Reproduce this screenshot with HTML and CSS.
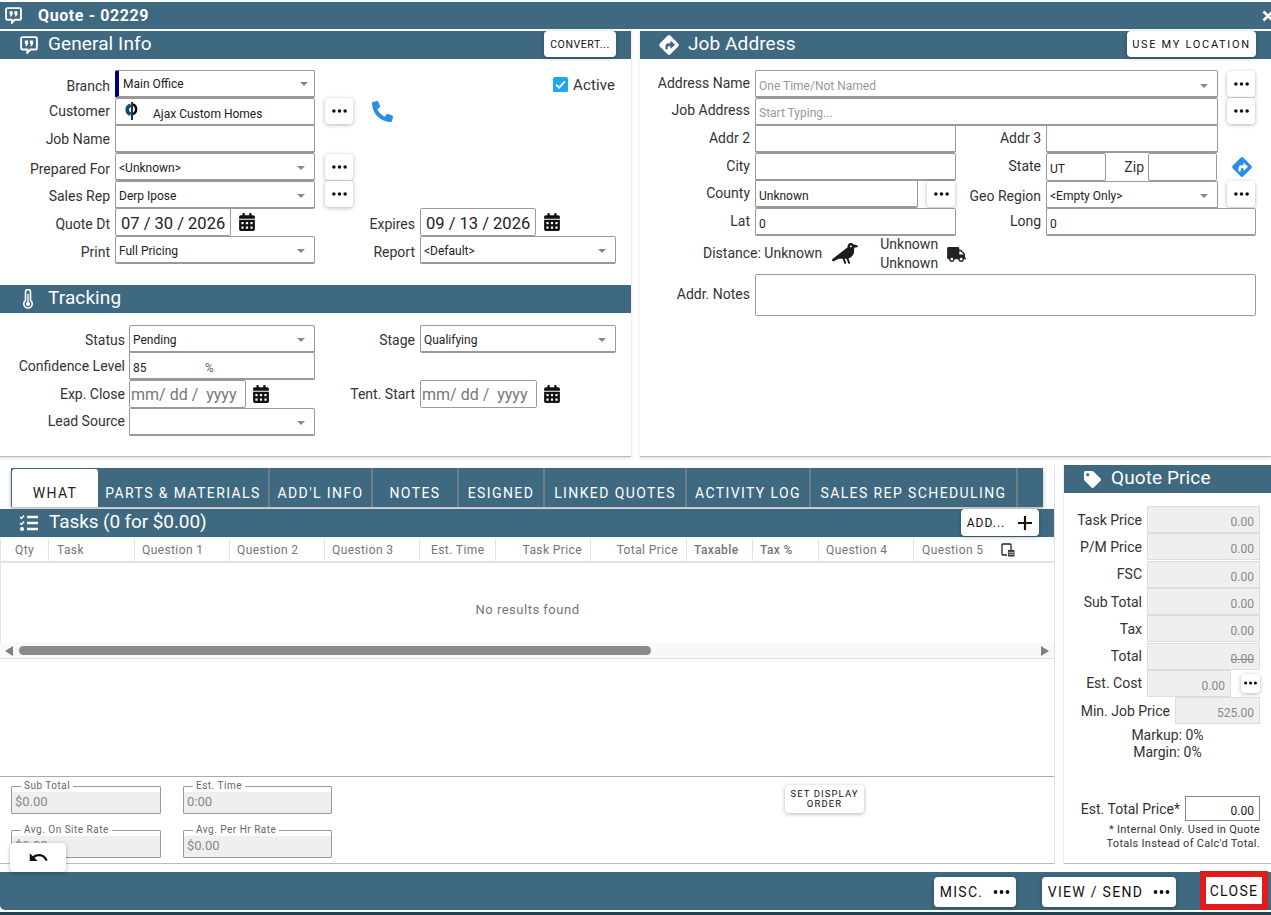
FILE: index.html
```html
<!DOCTYPE html>
<html>
<head>
    <meta charset="utf-8">
    <title>Quote - 02229</title>
    <link rel="stylesheet" href="styles.css">
</head>
<body>
    <svg class="defs" width="0" height="0">
        <symbol id="i-bubble" viewBox="0 0 16 16">
            <path d="M2.200 1h11.600c.7 0 1.200.5 1.200 1.200v8.600c0 .7-.5 1.200-1.200 1.200H9.200L6.500 15v-3H2.200c-.7 0-1.200-.5-1.200-1.200V2.200C1 1.500 1.500 1 2.200 1z" fill="none" stroke="currentColor" stroke-width="1.700"/>
            <path d="M4.300 4h2.900v3l-1.400 2H4.600l.8-2H4.300zM8.800 4h2.900v3l-1.400 2H9.100l.8-2H8.800z" fill="currentColor"/>
        </symbol>
        <symbol id="i-dots" viewBox="0 0 16 4">
            <circle cx="2" cy="2" r="1.900"/><circle cx="8" cy="2" r="1.900"/><circle cx="14" cy="2" r="1.900"/>
        </symbol>
        <symbol id="i-cal" viewBox="0 0 448 512">
            <path d="M0 464c0 26.500 21.500 48 48 48h352c26.500 0 48-21.500 48-48V192H0v272zm320-196c0-6.600 5.400-12 12-12h40c6.600 0 12 5.400 12 12v40c0 6.600-5.400 12-12 12h-40c-6.600 0-12-5.400-12-12v-40zm0 128c0-6.600 5.400-12 12-12h40c6.600 0 12 5.400 12 12v40c0 6.600-5.400 12-12 12h-40c-6.600 0-12-5.400-12-12v-40zM192 268c0-6.600 5.400-12 12-12h40c6.600 0 12 5.400 12 12v40c0 6.600-5.400 12-12 12h-40c-6.600 0-12-5.400-12-12v-40zm0 128c0-6.600 5.400-12 12-12h40c6.600 0 12 5.400 12 12v40c0 6.600-5.400 12-12 12h-40c-6.600 0-12-5.400-12-12v-40zM64 268c0-6.600 5.400-12 12-12h40c6.600 0 12 5.400 12 12v40c0 6.600-5.400 12-12 12H76c-6.600 0-12-5.400-12-12v-40zm0 128c0-6.600 5.400-12 12-12h40c6.600 0 12 5.400 12 12v40c0 6.600-5.400 12-12 12H76c-6.600 0-12-5.400-12-12v-40zM400 64h-48V16c0-8.800-7.200-16-16-16h-32c-8.800 0-16 7.200-16 16v48H160V16c0-8.800-7.200-16-16-16h-32c-8.800 0-16 7.200-16 16v48H48C21.500 64 0 85.500 0 112v48h448v-48c0-26.500-21.500-48-48-48z"/>
        </symbol>
        <symbol id="i-turn" viewBox="0 0 24 24">
            <rect x="4.500" y="4.500" width="15" height="15" rx="2" transform="rotate(45 12 12)" fill="currentColor"/>
        </symbol>
    </svg>

    <div class="dialog">
        <div class="titlebar">
            <svg class="ttl-icon"><use href="#i-bubble"/></svg>
            <span class="ttl-text">Quote - 02229</span>
            <svg class="ttl-close" viewBox="0 0 12 12"><path d="M1.500 1.500l9 9m0-9l-9 9" stroke="currentColor" stroke-width="2.600" fill="none"/></svg>
        </div>

        <div class="top">
            <section class="panel">
                <header class="sect">
                    <svg class="sect-icon"><use href="#i-bubble"/></svg>
                    <span class="sect-text">General Info</span>
                    <button class="btn btn-convert">CONVERT...</button>
                </header>
                <div class="frm frm-general">
                    <div class="lbl low">Branch</div>
                    <div class="field select branch">Main Office</div>
                    <label class="active-box">
                        <svg class="check" viewBox="0 0 16 16"><rect width="16" height="16" rx="2" fill="#1ea7f2"/><path d="M3.300 8.200l3.200 3.200 6.200-6.700" fill="none" stroke="#fff" stroke-width="1.800"/></svg>
                        Active
                    </label>
                    <div class="lbl">Customer</div>
                    <div class="field customer">
                        <svg class="logo" viewBox="0 0 20 22">
                            <path d="M8.500 4.500a5.200 5.200 0 0 0 0 10" fill="none" stroke="#0b4c70" stroke-width="4"/>
                            <path d="M11 3.500a6 6 0 0 1 0 11" fill="none" stroke="#000" stroke-width="2.600"/>
                            <path d="M10 1v20" stroke="#000" stroke-width="1.800"/>
                        </svg>
                        Ajax Custom Homes
                    </div>
                    <div class="cell">
                        <button class="btn btn-more btn-gen"><svg class="dots"><use href="#i-dots"/></svg></button>
                        <svg class="phone" viewBox="0 0 512 512"><path d="M493.400 24.600l-104-24c-11.300-2.600-22.900 3.300-27.500 13.900l-48 112c-4.200 9.800-1.400 21.300 6.900 28l60.600 49.600c-36 76.700-98.900 140.500-177.200 177.200l-49.600-60.600c-6.800-8.300-18.200-11.100-28-6.900l-112 48C3.900 366.500-2 378.100.6 389.400l24 104C27.100 504.200 36.700 512 48 512c256.100 0 464-207.500 464-464 0-11.200-7.700-20.900-18.600-23.400z"/></svg>
                    </div>
                    <div class="lbl">Job Name</div>
                    <div class="field"></div>
                    <div class="lbl low">Prepared For</div>
                    <div class="field select">&lt;Unknown&gt;</div>
                    <div class="cell"><button class="btn btn-more btn-gen"><svg class="dots"><use href="#i-dots"/></svg></button></div>
                    <div class="lbl low">Sales Rep</div>
                    <div class="field select">Derp Ipose</div>
                    <div class="cell"><button class="btn btn-more btn-gen"><svg class="dots"><use href="#i-dots"/></svg></button></div>
                    <div class="lbl low">Quote Dt</div>
                    <div class="cell">
                        <div class="field date">07 / 30 / 2026</div>
                        <svg class="cal"><use href="#i-cal"/></svg>
                    </div>
                    <div class="lbl lbl2 low">Expires</div>
                    <div class="cell">
                        <div class="field date">09 / 13 / 2026</div>
                        <svg class="cal"><use href="#i-cal"/></svg>
                    </div>
                    <div class="lbl low">Print</div>
                    <div class="field select">Full Pricing</div>
                    <div class="lbl lbl2 low">Report</div>
                    <div class="field select">&lt;Default&gt;</div>
                </div>

                <header class="sect sect-tracking">
                    <svg class="thermo" viewBox="0 0 12 20"><path d="M3.500 3a2.500 2.500 0 0 1 5 0v8.500a4.200 4.200 0 1 1-5 0z" fill="none" stroke="currentColor" stroke-width="1.600"/><circle cx="6" cy="15" r="2" fill="currentColor"/><path d="M6 5v9" stroke="currentColor" stroke-width="1.400"/></svg>
                    <span class="sect-text">Tracking</span>
                </header>
                <div class="frm frm-tracking">
                    <div class="lbl low">Status</div>
                    <div class="field select">Pending</div>
                    <div class="lbl lbl2 low">Stage</div>
                    <div class="field select">Qualifying</div>
                    <div class="lbl">Confidence Level</div>
                    <div class="field percent"><span class="pct-val">85</span><span class="pct-sign">%</span></div>
                    <div class="lbl">Exp. Close</div>
                    <div class="cell">
                        <div class="field date date-empty">mm/ dd / &nbsp;yyyy</div>
                        <svg class="cal"><use href="#i-cal"/></svg>
                    </div>
                    <div class="lbl lbl2">Tent. Start</div>
                    <div class="cell">
                        <div class="field date date-empty">mm/ dd / &nbsp;yyyy</div>
                        <svg class="cal"><use href="#i-cal"/></svg>
                    </div>
                    <div class="lbl">Lead Source</div>
                    <div class="field select"></div>
                </div>
            </section>

            <section class="panel">
                <header class="sect sect-job">
                    <svg class="job-icon" viewBox="0 0 24 24">
                        <use href="#i-turn"/>
                        <path d="M8.500 16.500v-3.200a3 3 0 0 1 3-3h2V7.500l4.500 4.300-4.500 4.300v-2.900h-2a.8.8 0 0 0-.8.8v2.500z" fill="#3e6980"/>
                    </svg>
                    <span class="sect-text">Job Address</span>
                    <button class="btn btn-location">USE MY LOCATION</button>
                </header>
                <div class="frm frm-job">
                    <div class="lbl">Address Name</div>
                    <div class="field select span3 hint">One Time/Not Named</div>
                    <div class="cell cell-more"><button class="btn btn-more"><svg class="dots"><use href="#i-dots"/></svg></button></div>
                    <div class="lbl">Job Address</div>
                    <div class="field span3 hint">Start Typing...</div>
                    <div class="cell cell-more"><button class="btn btn-more"><svg class="dots"><use href="#i-dots"/></svg></button></div>
                    <div class="lbl">Addr 2</div>
                    <div class="field"></div>
                    <div class="lbl lbl2">Addr 3</div>
                    <div class="field"></div>
                    <div class="lbl">City</div>
                    <div class="field"></div>
                    <div class="lbl lbl2">State</div>
                    <div class="cell">
                        <div class="field state">UT</div>
                        <div class="zip-lbl">Zip</div>
                        <div class="field zip"></div>
                    </div>
                    <svg class="go-icon" viewBox="0 0 24 24">
                        <use href="#i-turn"/>
                        <path d="M8.500 16.500v-3.200a3 3 0 0 1 3-3h2V7.500l4.500 4.300-4.500 4.300v-2.900h-2a.8.8 0 0 0-.8.8v2.500z" fill="#fff"/>
                    </svg>
                    <div class="lbl">County</div>
                    <div class="cell">
                        <div class="field county">Unknown</div>
                        <button class="btn btn-more"><svg class="dots"><use href="#i-dots"/></svg></button>
                    </div>
                    <div class="lbl lbl2 low">Geo Region</div>
                    <div class="field select">&lt;Empty Only&gt;</div>
                    <div class="cell cell-more"><button class="btn btn-more"><svg class="dots"><use href="#i-dots"/></svg></button></div>
                    <div class="lbl">Lat</div>
                    <div class="field">0</div>
                    <div class="lbl lbl2">Long</div>
                    <div class="field span2">0</div>
                    <div class="distance">
                        <span>Distance: Unknown</span>
                        <svg class="crow" viewBox="0 0 640 512"><path d="M544 32h-16.360C513.040 12.680 490.090 0 464 0c-44.180 0-80 35.820-80 80v20.980L12.090 393.570A30.216 30.216 0 0 0 0 417.740c0 22.460 23.640 37.070 43.730 27.030L165.270 384h96.490l44.410 120.100c2.270 6.230 9.150 9.440 15.380 7.170l22.550-8.210c6.230-2.270 9.440-9.150 7.170-15.380L312.940 384H352c1.910 0 3.760-.23 5.660-.29l44.510 120.380c2.270 6.230 9.150 9.440 15.380 7.170l22.550-8.210c6.230-2.270 9.440-9.150 7.170-15.380l-41.240-111.530C485.740 352.800 544 279.260 544 192v-80l96-16c0-35.350-42.980-64-96-64zm-80 72c-13.250 0-24-10.750-24-24 0-13.260 10.750-24 24-24s24 10.740 24 24c0 13.250-10.750 24-24 24z"/></svg>
                        <div class="drive"><div>Unknown</div><div>Unknown</div></div>
                        <svg class="truck" viewBox="0 0 640 512"><path d="M624 352h-16V243.900c0-12.700-5.100-24.900-14.100-33.900L494 110.100c-9-9-21.200-14.100-33.900-14.100H416V48c0-26.500-21.500-48-48-48H48C21.500 0 0 21.500 0 48v320c0 26.500 21.500 48 48 48h16c0 53 43 96 96 96s96-43 96-96h128c0 53 43 96 96 96s96-43 96-96h48c8.800 0 16-7.200 16-16v-32c0-8.800-7.200-16-16-16zM160 464c-26.500 0-48-21.500-48-48s21.500-48 48-48 48 21.500 48 48-21.500 48-48 48zm320 0c-26.500 0-48-21.500-48-48s21.500-48 48-48 48 21.500 48 48-21.500 48-48 48zm80-208H416V144h44.100l99.900 99.900V256z"/></svg>
                    </div>
                    <div class="lbl">Addr. Notes</div>
                    <div class="field notes"></div>
                </div>
            </section>
        </div>

        <div class="main">
            <section class="work">
                <nav class="tabs">
                    <div class="tab tab-on">WHAT</div>
                    <div class="tab t1">PARTS &amp; MATERIALS</div>
                    <div class="tab t2">ADD'L INFO</div>
                    <div class="tab t3">NOTES</div>
                    <div class="tab t3">ESIGNED</div>
                    <div class="tab t4">LINKED QUOTES</div>
                    <div class="tab t5">ACTIVITY LOG</div>
                    <div class="tab t6">SALES REP SCHEDULING</div>
                </nav>
                <header class="sect sect-tasks">
                    <svg class="tasks-icon" viewBox="0 0 20 18">
                        <path d="M1 3l1.500 1.500L5 1.500M1 9l1.500 1.500L5 7.500" fill="none" stroke="currentColor" stroke-width="1.500"/>
                        <circle cx="3" cy="15" r="2" fill="currentColor"/>
                        <path d="M8 3h11M8 9h11M8 15h11" stroke="currentColor" stroke-width="2.400"/>
                    </svg>
                    <span class="sect-text">Tasks (0 for $0.00)</span>
                    <button class="btn btn-add">ADD...<svg class="plus" viewBox="0 0 16 16"><path d="M8 1v14M1 8h14" stroke="#111" stroke-width="2.200"/></svg></button>
                </header>
                <div class="thead">
                    <div class="th th-qty">Qty</div>
                    <div class="th th-task">Task</div>
                    <div class="th">Question 1</div>
                    <div class="th">Question 2</div>
                    <div class="th">Question 3</div>
                    <div class="th th-time">Est. Time</div>
                    <div class="th th-r">Task Price</div>
                    <div class="th th-r">Total Price</div>
                    <div class="th th-b">Taxable</div>
                    <div class="th th-b">Tax %</div>
                    <div class="th">Question 4</div>
                    <div class="th th-q5">Question 5
                        <svg class="col-icon" viewBox="0 0 14 14"><path d="M10 8V2a1 1 0 0 0-1-1H2a1 1 0 0 0-1 1v9a1 1 0 0 0 1 1h4" fill="none" stroke="#222" stroke-width="1.300"/><rect x="7" y="7" width="6.500" height="6.500" fill="#333"/><path d="M7.500 9.300h5.500M7.500 11.300h5.500" stroke="#fff" stroke-width=".7"/></svg>
                    </div>
                </div>
                <div class="empty">No results found</div>
                <div class="hscroll">
                    <i class="arrow arrow-l"></i>
                    <i class="thumb"></i>
                    <i class="arrow arrow-r"></i>
                </div>
                <div class="spacer"></div>
                <div class="totals">
                    <fieldset class="box"><legend>Sub Total</legend>$0.00</fieldset>
                    <fieldset class="box"><legend>Est. Time</legend>0:00</fieldset>
                    <button class="btn btn-order">SET DISPLAY ORDER</button>
                    <fieldset class="box"><legend>Avg. On Site Rate</legend>$0.00</fieldset>
                    <fieldset class="box"><legend>Avg. Per Hr Rate</legend>$0.00</fieldset>
                </div>
            </section>

            <aside class="price">
                <header class="sect sect-price">
                    <svg class="tag" viewBox="0 0 512 512"><path d="M0 252.118V48C0 21.490 21.490 0 48 0h204.118a48 48 0 0 1 33.941 14.059l211.882 211.882c18.745 18.745 18.745 49.137 0 67.882L293.823 497.941c-18.745 18.745-49.137 18.745-67.882 0L14.059 286.059A48 48 0 0 1 0 252.118zM112 64c-26.510 0-48 21.490-48 48s21.490 48 48 48 48-21.490 48-48-21.490-48-48-48z"/></svg>
                    <span class="sect-text">Quote Price</span>
                </header>
                <div class="price-rows">
                    <div class="prow"><span>Task Price</span><div class="amt">0.00</div></div>
                    <div class="prow"><span>P/M Price</span><div class="amt">0.00</div></div>
                    <div class="prow"><span>FSC</span><div class="amt">0.00</div></div>
                    <div class="prow"><span>Sub Total</span><div class="amt">0.00</div></div>
                    <div class="prow"><span>Tax</span><div class="amt">0.00</div></div>
                    <div class="prow"><span>Total</span><div class="amt amt-strike">0.00</div></div>
                    <div class="prow"><span>Est. Cost</span><div class="amt amt-cost">0.00</div><button class="btn btn-mini"><svg class="dots dots-mini"><use href="#i-dots"/></svg></button></div>
                    <div class="prow"><span>Min. Job Price</span><div class="amt amt-min">525.00</div></div>
                </div>
                <div class="ratios">
                    <div>Markup: 0%</div>
                    <div>Margin: 0%</div>
                </div>
                <div class="prow prow-est"><span>Est. Total Price*</span><div class="amt amt-est">0.00</div></div>
                <p class="note">* Internal Only. Used in Quote<br>Totals Instead of Calc'd Total.</p>
            </aside>
        </div>

        <footer class="foot">
            <button class="btn btn-foot btn-misc">MISC.<svg class="dots"><use href="#i-dots"/></svg></button>
            <button class="btn btn-foot btn-view">VIEW / SEND<svg class="dots"><use href="#i-dots"/></svg></button>
            <button class="btn btn-foot btn-close">CLOSE</button>
        </footer>
        <div class="under"></div>

        <!-- sits over the totals, same as the app's floating back button -->
        <button class="btn btn-undo">
            <svg viewBox="0 0 24 24"><path d="M12.500 8c-2.650 0-5.050.99-6.900 2.600L2 7v9h9l-3.620-3.620c1.390-1.160 3.160-1.880 5.120-1.880 3.540 0 6.550 2.310 7.600 5.500l2.370-.78C21.080 11.030 17.150 8 12.500 8z"/></svg>
        </button>
    </div>
</body>
</html>
```

FILE: styles.css
```css
* {
    box-sizing: border-box;
}

html, body {
    margin: 0;
    padding: 0;
    background: #fff;
}

body {
    font-family: Roboto, "Liberation Sans", sans-serif;
    font-size: 14px;
    color: #333;
    overflow: hidden;
}

.defs {
    position: absolute;
}

.dialog {
    position: relative;
    display: flex;
    flex-direction: column;
    width: 1271px;
    height: 915px;
    overflow: hidden;
}

.dialog > * {
    flex: none;
}

/* title bar */
.titlebar {
    display: flex;
    align-items: center;
    height: 27px;
    margin-top: 2px;
    margin-bottom: 2px;
    background: #3e6980;
    color: #fff;
}

.ttl-icon {
    width: 17px;
    height: 17px;
    margin-left: 5px;
}

.ttl-text {
    margin-left: 16px;
    font-size: 16px;
    font-weight: 700;
    letter-spacing: .6px;
}

.ttl-close {
    width: 12px;
    height: 12px;
    margin-left: auto;
    margin-right: -3px;
}

/* section headers */
.sect {
    display: flex;
    align-items: center;
    height: 28px;
    background: #3e6980;
    color: #fff;
}

.sect-text {
    padding-bottom: 4px;
    font-size: 19px;
    letter-spacing: .1px;
    white-space: nowrap;
}

.sect-tasks .sect-text {
    letter-spacing: -.1px;
}

.sect-tracking .sect-text {
    padding-bottom: 2px;
}

.sect-icon {
    width: 18px;
    height: 18px;
    margin: 0 10px 0 20px;
}

.sect-tracking {
    margin-top: 21px;
}

.thermo {
    width: 12px;
    height: 20px;
    margin: 0 14px 0 22px;
}

.job-icon {
    width: 24px;
    height: 24px;
    margin: 0 7px 0 17px;
    color: #fff;
}

.tasks-icon {
    width: 20px;
    height: 18px;
    margin: 0 10px 0 19px;
}

.sect-tasks {
    margin-top: 2px;
}

.tag {
    width: 17px;
    height: 17px;
    margin: 0 10px 0 20px;
    fill: #fff;
}

/* buttons */
.btn {
    display: inline-flex;
    align-items: center;
    justify-content: center;
    padding: 0;
    border: 0;
    border-radius: 4px;
    background: #fff;
    color: #111;
    font-family: inherit;
    box-shadow: 0 1px 4px rgba(0, 0, 0, .3);
}

.btn-more {
    width: 28px;
    height: 26px;
}

.btn-gen {
    margin-left: 5px;
}

.dots {
    width: 15px;
    height: 4px;
    fill: #111;
}

.btn-convert {
    width: 72px;
    height: 26px;
    margin-left: auto;
    margin-right: 15px;
    align-self: flex-start;
    font-size: 10.500px;
    letter-spacing: .6px;
}

.btn-location {
    width: 129px;
    height: 26px;
    margin-left: auto;
    margin-right: 15px;
    align-self: flex-start;
    font-size: 11px;
    letter-spacing: 1.700px;
}

.btn-add {
    width: 78px;
    height: 27px;
    margin-left: auto;
    margin-right: 15px;
    align-self: flex-start;
    font-size: 12px;
    letter-spacing: 1px;
}

.plus {
    width: 16px;
    height: 16px;
    margin-left: 12px;
}

.btn-order {
    width: 79px;
    height: 28px;
    margin: 4px 0 0 431px;
    font-size: 9.500px;
    line-height: 10px;
    letter-spacing: 1.100px;
}

.btn-mini {
    width: 19px;
    height: 19px;
    margin-left: 10px;
}

.dots-mini {
    width: 13px;
}

/* top panels */
.top {
    display: grid;
    grid-template-columns: 631px 631px;
    column-gap: 9px;
    height: 426px;
    margin-bottom: 8px;
}

.panel {
    border-bottom: 1px solid #bbb;
    box-shadow: 0 1px 3px rgba(0, 0, 0, .15);
}

.frm {
    display: grid;
    grid-auto-rows: 27.670px;
    margin-top: 11px;
}

.frm-general {
    grid-template-columns: 110px 200px 95px 196px;
    column-gap: 5px;
}

.frm-tracking {
    grid-template-columns: 125px 186px 97px 196px;
    column-gap: 4px;
    margin-top: 12px;
}

.frm-job {
    grid-template-columns: 110px 201px 80px 172px 33px;
    grid-template-rows: repeat(6, 27.670px) 38px 42px;
    column-gap: 5px;
}

.lbl {
    grid-column: 1;
    align-self: center;
    text-align: right;
    white-space: nowrap;
}

.low {
    padding-top: 4px;
}

.frm-job .lbl {
    padding-bottom: 2px;
}

.frm-job .low {
    padding: 4px 0 0;
}

.frm-tracking .lbl2 {
    padding-right: 1px;
}

.lbl2 {
    grid-column: 3;
}

.cell {
    display: flex;
    align-items: center;
    min-width: 0;
}

.cell-more {
    grid-column: 5;
    padding-left: 4px;
}

.field {
    display: flex;
    align-items: center;
    min-width: 0;
    height: 28px;
    padding: 4px 3px 0;
    border: 1px solid #999;
    border-bottom-width: 2px;
    border-radius: 2px;
    background: #fff;
    color: #222;
    font-size: 12px;
    white-space: nowrap;
}

.select::after {
    content: "";
    margin-left: auto;
    margin-right: 6px;
    border-left: 4px solid transparent;
    border-right: 4px solid transparent;
    border-top: 4px solid #888;
}

.branch {
    padding: 0 0 0 4px;
    border-left: 4px solid #000080;
}

.span3 {
    grid-column: span 3;
}

.span2 {
    grid-column: span 2;
}

.hint {
    color: #999;
}

.active-box {
    grid-column: 4;
    display: flex;
    align-items: center;
    justify-content: flex-end;
    padding: 2px 1px 0 0;
    font-size: 15px;
    letter-spacing: .1px;
}

.check {
    width: 15px;
    height: 15px;
    margin-right: 5px;
}

.customer {
    padding-top: 5px;
    padding-left: 7px;
}

.logo {
    width: 18px;
    height: 20px;
    margin: -5px 12px 0 0;
}

.phone {
    width: 21px;
    height: 21px;
    margin-left: 19px;
    fill: #2a8ee8;
    transform: scaleX(-1);
}

.date {
    flex: none;
    width: 116px;
    padding: 2px 0 0 5px;
    border-bottom-width: 1px;
    font-size: 16.500px;
    letter-spacing: 0;
}

.date-empty {
    padding-left: 1px;
    font-size: 16px;
    color: #777;
}

.frm-tracking .date {
    width: 117px;
}

.frm-tracking .cal {
    margin-left: 7px;
}

.cal {
    flex: none;
    width: 16px;
    height: 18px;
    margin-left: 8px;
    fill: #111;
}

.percent {
    padding-left: 3px;
}

.pct-val {
    width: 72px;
}

.pct-sign {
    color: #7a5a50;
}

.state {
    flex: none;
    width: 60px;
    border-bottom-width: 1px;
}

.zip-lbl {
    width: 38px;
    font-size: 14px;
    text-align: right;
}

.zip {
    flex: none;
    width: 69px;
    margin-left: 4px;
    border-bottom-width: 1px;
}

.go-icon {
    width: 24px;
    height: 24px;
    margin: 2px 0 0 7px;
    color: #2a8ee8;
}

.county {
    flex: none;
    width: 163px;
    margin-right: 9px;
}

.distance {
    grid-column: 1 / -1;
    display: flex;
    align-items: center;
    padding: 0 0 3px 63px;
}

.crow {
    width: 26px;
    height: 21px;
    margin-left: 10px;
    fill: #1c1c1c;
}

.drive {
    margin: 2px 0 0 22px;
    line-height: 19px;
}

.truck {
    width: 19px;
    height: 15px;
    margin: 2px 0 0 9px;
    fill: #222;
}

.notes {
    grid-column: 2 / -1;
    height: 42px;
    border-bottom-width: 1px;
}

/* lower left: tabs and task grid */
.main {
    display: grid;
    grid-template-columns: 1055px 207px;
    column-gap: 9px;
    height: 399px;
    margin-bottom: 8px;
}

.work {
    display: flex;
    flex-direction: column;
    border-right: 1px solid #e2e2e2;
    border-bottom: 1px solid #bbb;
}

.tabs {
    display: flex;
    width: 1032px;
    height: 39px;
    margin: 3px 0 0 11px;
    padding-left: 1px;
    background: #3e6980;
    box-shadow: 0 2px 4px rgba(0, 0, 0, .3);
}

.tab {
    display: flex;
    align-items: flex-end;
    justify-content: center;
    padding-bottom: 6px;
    border-right: 2px solid #6f7d86;
    color: #fff;
    font-size: 14px;
    letter-spacing: 1.400px;
    white-space: nowrap;
}

.tab-on {
    width: 86px;
    margin-top: 1px;
    border-right: 0;
    border-radius: 3px 3px 0 0;
    background: #fff;
    color: #222;
}

.t1 { width: 172px; }
.t2 { width: 103px; }
.t3 { width: 86px; }
.t4 { width: 142px; }
.t5 { width: 124px; }
.t6 { width: 207px; }

.thead {
    display: grid;
    grid-template-columns: 48px 86px 95px 95px 95px 76px 95px 96px 66px 66px 95px 94px;
    height: 24px;
    margin-top: 2px;
    border-left: 1px solid #e2e2e2;
    border-bottom: 2px solid #e2e2e2;
}

.th {
    display: flex;
    align-items: center;
    padding-left: 7px;
    border-right: 1px solid #e2e2e2;
    color: #757575;
    font-size: 12px;
    letter-spacing: .4px;
    white-space: nowrap;
}

.th-qty {
    padding-left: 14px;
}

.th-task {
    padding-left: 8px;
}

.th-time {
    padding-left: 11px;
}

.th-r {
    justify-content: flex-end;
    padding-right: 8px;
}

.th-b {
    font-weight: 500;
}

.th-q5 {
    padding-left: 8px;
    border-right: 0;
}

.col-icon {
    width: 14px;
    height: 14px;
    margin-left: 18px;
    flex: none;
}

.empty {
    display: flex;
    align-items: center;
    justify-content: center;
    height: 80px;
    padding-top: 12px;
    border-left: 1px solid #e2e2e2;
    color: #757575;
    font-size: 13px;
    letter-spacing: .5px;
}

.hscroll {
    display: flex;
    align-items: center;
    height: 16px;
    padding: 0 5px;
    background: #f8f8f8;
    border-bottom: 1px solid #ddd;
}

.thumb {
    width: 632px;
    height: 9px;
    margin-left: 6px;
    border-radius: 5px;
    background: #8a8a8a;
}

.arrow {
    width: 0;
    height: 0;
    border-top: 5px solid transparent;
    border-bottom: 5px solid transparent;
}

.arrow-l {
    border-right: 8px solid #808080;
}

.arrow-r {
    margin-left: auto;
    border-left: 8px solid #808080;
}

.spacer {
    flex: 1;
}

.totals {
    display: grid;
    grid-template-columns: 150px 149px 510px;
    grid-auto-rows: 33px;
    column-gap: 22px;
    row-gap: 11px;
    height: 87px;
    padding: 4px 0 0 11px;
    border-top: 1px solid #aaa;
}

.box {
    height: 33px;
    margin: 0;
    padding: 0 0 0 3px;
    border: 1px solid #999;
    border-radius: 1px;
    background: linear-gradient(#fff 5px, #efefef 5px);
    color: #888;
    font-size: 13px;
    line-height: 21px;
}

.box legend {
    margin-left: 6px;
    padding: 0 3px;
    color: #666;
    font-size: 10px;
    line-height: 10px;
    letter-spacing: .5px;
}

/* quote price column */
.price {
    display: flex;
    flex-direction: column;
    border-bottom: 1px solid #bbb;
    box-shadow: -1px 0 0 #eee;
}

.price-rows {
    margin-top: 13px;
}

.prow {
    display: flex;
    align-items: center;
    justify-content: flex-end;
    height: 27.300px;
    padding-right: 11px;
    white-space: nowrap;
}

.prow > span {
    margin-right: 5px;
}

.amt {
    display: flex;
    align-items: center;
    justify-content: flex-end;
    width: 113px;
    height: 27px;
    padding: 5px 5px 0 0;
    border: 1px solid #ddd;
    background: #efefef;
    color: #888;
    font-size: 12px;
}

.amt-strike {
    text-decoration: line-through;
}

.amt-cost {
    width: 84px;
}

.amt-min {
    width: 85px;
}

.ratios {
    margin-top: 3px;
    line-height: 17px;
    text-align: center;
}

.prow-est {
    margin-top: 35px;
    height: 25px;
}

.amt-est {
    width: 75px;
    height: 25px;
    border-color: #888;
    background: #fff;
    color: #222;
    font-size: 12px;
}

.note {
    margin: 2px 0 0;
    padding-right: 11px;
    font-size: 11px;
    line-height: 14px;
    letter-spacing: .3px;
    text-align: right;
}

/* footer */
.foot {
    display: flex;
    align-items: center;
    justify-content: flex-end;
    height: 38px;
    padding: 2px 9px 0 0;
    border-bottom-left-radius: 5px;
    background: #3e6980;
}

.btn-foot {
    height: 30px;
    font-size: 14px;
    letter-spacing: 1.300px;
}

.btn-misc {
    width: 82px;
}

.btn-misc .dots,
.btn-view .dots {
    width: 17px;
    margin-left: 10px;
}

.btn-view {
    width: 134px;
    margin-left: 26px;
}

.btn-close {
    width: 56px;
    height: 27px;
    margin-left: 30px;
    margin-top: -3px;
    padding-top: 1px;
    border-radius: 0;
    outline: 6px solid #e21b1b;
    box-shadow: none;
}

.under {
    height: 3px;
    margin-top: 2px;
    background: #24424f;
}

.btn-undo {
    position: absolute;
    left: 10px;
    top: 843px;
    width: 56px;
    height: 29px;
}

.btn-undo svg {
    width: 21px;
    height: 21px;
    fill: #111;
}
```
